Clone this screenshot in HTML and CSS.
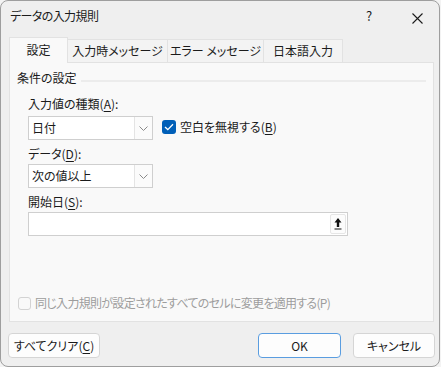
FILE: index.html
```html
<!DOCTYPE html>
<html lang="ja">
<head>
<meta charset="utf-8">
<title>データの入力規則</title>
<link rel="stylesheet" href="styles.css">
</head>
<body>
<div class="window">
  <div class="titlebar">
    <div class="title">データの入力規則</div>
    <div class="help">?</div>
    <div class="close">
      <svg width="11" height="11" viewBox="0 0 11 11"><path d="M0.5 0.5 L10.5 10.5 M10.5 0.5 L0.5 10.5" stroke="#1b1b1b" stroke-width="1.1" fill="none"/></svg>
    </div>
  </div>
  <div class="tabs">
    <div class="tab active t1">設定</div>
    <div class="tab t2">入力時メッセージ</div>
    <div class="tab t3">エラー メッセージ</div>
    <div class="tab t4">日本語入力</div>
  </div>
  <div class="panel">
    <div class="group-head">
      <span class="group-label">条件の設定</span>
      <span class="group-line"></span>
    </div>
    <div class="fields">
      <div class="label l1">入力値の種類(<u>A</u>):</div>
      <div class="row">
        <div class="select">
          <span class="select-text">日付</span>
          <span class="select-btn"><svg width="9" height="5" viewBox="0 0 9 5"><path d="M0.5 0.5 L4.5 4.5 L8.5 0.5" stroke="#8a8a8a" stroke-width="1" fill="none"/></svg></span>
        </div>
        <label class="check">
          <span class="box checked"><svg width="10" height="8" viewBox="0 0 10 8"><path d="M1 4 L3.8 6.6 L9 1.2" stroke="#fff" stroke-width="1.3" fill="none"/></svg></span>
          <span>空白を無視する(<u>B</u>)</span>
        </label>
      </div>
      <div class="label l2">データ(<u>D</u>):</div>
      <div class="select">
        <span class="select-text">次の値以上</span>
        <span class="select-btn"><svg width="9" height="5" viewBox="0 0 9 5"><path d="M0.5 0.5 L4.5 4.5 L8.5 0.5" stroke="#8a8a8a" stroke-width="1" fill="none"/></svg></span>
      </div>
      <div class="label l2">開始日(<u>S</u>):</div>
      <div class="input">
        <span class="input-text"></span>
        <span class="ref-btn"><svg width="8" height="12" viewBox="0 0 8 12"><path d="M4 0 L7.5 4.5 L5.2 4.5 L5.2 9 L2.8 9 L2.8 4.5 L0.5 4.5 Z" fill="#111"/><rect x="0.5" y="10.5" width="7" height="1" fill="#111"/></svg></span>
      </div>
    </div>
    <div class="apply">
      <span class="box disabled"></span>
      <span class="apply-text">同じ入力規則が設定されたすべてのセルに変更を適用する(P)</span>
    </div>
  </div>
  <div class="buttons">
    <div class="btn clear">すべてクリア(<u>C</u>)</div>
    <div class="spacer"></div>
    <div class="btn ok">OK</div>
    <div class="btn cancel">キャンセル</div>
  </div>
</div>
</body>
</html>
```
FILE: styles.css
```css
html, body {
  margin: 0;
  padding: 0;
}
body {
  background: #f3f3f3;
  font-family: "Noto Sans CJK JP", "Noto Sans", sans-serif;
  font-size: 12px;
  font-feature-settings: "palt";
  color: #1b1b1b;
  line-height: 16px;
}
u {
  text-underline-offset: 2px;
}
.window {
  box-sizing: border-box;
  width: 440px;
  height: 367px;
  border: 1px solid #9e9e9e;
  border-radius: 8px;
  background: #efefef;
  display: flex;
  flex-direction: column;
  overflow: hidden;
}
.titlebar {
  height: 36px;
  display: flex;
  align-items: flex-start;
  flex-shrink: 0;
}
.title {
  padding: 7px 0 0 9px;
  flex: 1;
  letter-spacing: -0.6px;
}
.help {
  padding-top: 7px;
  width: 10px;
  margin-right: 36px;
  font-size: 13px;
}
.close {
  padding-top: 10px;
  margin-right: 16px;
}
.tabs {
  display: flex;
  align-items: flex-end;
  height: 25px;
  margin-left: 8px;
  flex-shrink: 0;
}
.tab {
  box-sizing: border-box;
  height: 23px;
  line-height: 21px;
  text-align: center;
  background: #f3f3f3;
  border: 1px solid #e2e2e2;
  border-left: none;
  border-bottom: none;
  color: #1b1b1b;
}
.tab.active {
  position: relative;
  z-index: 1;
  height: 26px;
  margin-bottom: -1px;
  line-height: 24px;
  background: #f9f9f9;
  border-left: 1px solid #e2e2e2;
}
.t1 { width: 59px; }
.t2 { width: 100px; }
.t3 { width: 96px; }
.t4 { width: 79px; }
.panel {
  box-sizing: border-box;
  width: 425px;
  height: 260px;
  margin-left: 8px;
  background: #f9f9f9;
  border: 1px solid #e2e2e2;
  display: flex;
  flex-direction: column;
  flex-shrink: 0;
}
.group-head {
  display: flex;
  margin: 7px 0 0 7px;
  height: 16px;
}
.group-label {
  white-space: nowrap;
}
.group-line {
  flex: 1;
  height: 2px;
  background: #ececec;
  margin: 10px 7px 0 4px;
}
.fields {
  padding-left: 18px;
  display: flex;
  flex-direction: column;
  align-items: flex-start;
}
.label.l1 {
  margin-top: 10px;
  margin-bottom: 4px;
}
.label.l2 {
  margin-top: 6px;
  margin-bottom: 2px;
}
.row {
  display: flex;
  align-items: center;
}
.select {
  box-sizing: border-box;
  width: 125px;
  height: 24px;
  background: #ffffff;
  border: 1px solid #cfcfcf;
  display: flex;
  align-items: stretch;
}
.select-text {
  flex: 1;
  padding-left: 3px;
  line-height: 22px;
}
.select-btn {
  width: 17px;
  border-left: 1px solid #e4e4e4;
  background: #fbfbfb;
  display: flex;
  align-items: center;
  justify-content: center;
}
.check {
  display: flex;
  align-items: center;
  margin-left: 9px;
  margin-top: -2px;
}
.box {
  box-sizing: border-box;
  width: 14px;
  height: 14px;
  border-radius: 3px;
  display: flex;
  align-items: center;
  justify-content: center;
}
.box.checked {
  background: #005fb8;
  margin-right: 4px;
}
.box.disabled {
  width: 13px;
  height: 13px;
  border: 1px solid #d3d3d3;
  background: #f9f9f9;
  margin-right: 4px;
}
.input {
  box-sizing: border-box;
  width: 320px;
  height: 24px;
  background: #ffffff;
  border: 1px solid #cfcfcf;
  display: flex;
}
.input-text {
  flex: 1;
}
.ref-btn {
  box-sizing: border-box;
  width: 16px;
  margin: 1px;
  border: 1px solid #e6e6e6;
  border-radius: 2px;
  background: #fcfcfc;
  display: flex;
  align-items: center;
  justify-content: center;
}
.apply {
  margin-top: auto;
  margin-bottom: 10px;
  margin-left: 8px;
  display: flex;
  align-items: center;
  color: #9d9d9d;
}
.apply-text {
  letter-spacing: -0.7px;
}
.buttons {
  display: flex;
  margin-top: 11px;
  height: 25px;
  padding-left: 7px;
  padding-right: 4px;
}
.spacer {
  flex: 1;
}
.btn {
  box-sizing: border-box;
  height: 25px;
  line-height: 23px;
  text-align: center;
  background: #fdfdfd;
  border: 1px solid #d5d5d5;
  border-radius: 4px;
}
.btn.clear { width: 92px; }
.btn.ok {
  width: 83px;
  border: 1px solid #5a9de0;
  margin-right: 12px;
}
.btn.cancel { width: 82px; }
```
